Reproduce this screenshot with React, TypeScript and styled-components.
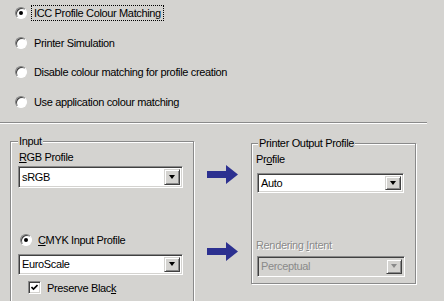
import React from 'react';
import styled, { createGlobalStyle } from 'styled-components';

const GlobalStyle = createGlobalStyle`
  html, body {
    margin: 0;
    padding: 0;
    overflow: hidden;
    background: #d4d3d0;
  }
  body {
    font-family: 'Liberation Sans', Arial, sans-serif;
    font-size: 11px;
    letter-spacing: -0.35px;
    color: #000;
  }
`;

const Page = styled.div`
  width: 444px;
  height: 301px;
  overflow: hidden;
  background: #d4d3d0;
`;

const OptionList = styled.div`
  display: flex;
  flex-direction: column;
  gap: 13.5px;
  padding: 5px 0 0 15px;
`;

const OptionRow = styled.label`
  display: flex;
  align-items: center;
  height: 16px;
  gap: 4px;
`;

const Radio = styled.span<{ checked?: boolean }>`
  position: relative;
  width: 10px;
  height: 10px;
  border-radius: 50%;
  border: 1px solid;
  border-color: #808080 #ffffff #ffffff #808080;
  box-shadow: inset 1px 1px 0 #404040;
  background: #fff;
  flex: none;
  &::after {
    content: '';
    display: ${(p) => (p.checked ? 'block' : 'none')};
    position: absolute;
    left: 3px;
    top: 3px;
    width: 4px;
    height: 4px;
    border-radius: 50%;
    background: #000;
  }
`;

const OptionText = styled.span<{ focused?: boolean }>`
  line-height: 14px;
  padding: 0 2px;
  border: 1px dotted ${(p) => (p.focused ? '#000' : 'transparent')};
`;

const Separator = styled.div`
  width: 427px;
  height: 1px;
  margin-top: 12px;
  background: #8a8a8a;
  border-bottom: 1px solid #fff;
`;

const Bottom = styled.div`
  display: flex;
  align-items: flex-start;
  padding-left: 10px;
`;

const Group = styled.div<{ $w: number; $h: number; $top: number; $left?: number }>`
  position: relative;
  box-sizing: border-box;
  width: ${(p) => p.$w}px;
  height: ${(p) => p.$h}px;
  margin: ${(p) => p.$top}px 0 0 ${(p) => p.$left ?? 0}px;
  border: 1px solid #8a8a8a;
  box-shadow: inset 1px 1px 0 #fff, 1px 1px 0 #fff;
  display: flex;
  flex-direction: column;
`;

const Legend = styled.span<{ $left: number }>`
  position: absolute;
  top: -7px;
  left: ${(p) => p.$left}px;
  padding: 0 1px;
  line-height: 13px;
  background: #d4d3d0;
`;

const FieldLabel = styled.div<{ disabled?: boolean; $left: number; $top: number }>`
  line-height: 13px;
  margin: ${(p) => p.$top}px 0 0 ${(p) => p.$left}px;
  color: ${(p) => (p.disabled ? '#8a8a8a' : '#000')};
  text-shadow: ${(p) => (p.disabled ? '1px 1px 0 #fff' : 'none')};
`;

const Combo = styled.div<{ disabled?: boolean; $w: number; $h: number; $left: number; $top: number }>`
  box-sizing: border-box;
  width: ${(p) => p.$w}px;
  height: ${(p) => p.$h}px;
  margin: ${(p) => p.$top}px 0 0 ${(p) => p.$left}px;
  border: 1px solid;
  border-color: #8a8a8a #fff #fff #8a8a8a;
  box-shadow: inset 1px 1px 0 #404040, inset -1px -1px 0 #d4d3d0;
  background: ${(p) => (p.disabled ? '#d4d3d0' : '#fff')};
  color: ${(p) => (p.disabled ? '#8a8a8a' : '#000')};
  display: flex;
  align-items: center;
  padding: 2px 2px 2px 3px;
`;

const ComboText = styled.span`
  flex: 1;
  line-height: 14px;
`;

const ComboButton = styled.span<{ disabled?: boolean }>`
  box-sizing: border-box;
  width: 16px;
  height: 100%;
  border: 1px solid;
  border-color: #d4d3d0 #404040 #404040 #d4d3d0;
  box-shadow: inset 1px 1px 0 #fff, inset -1px -1px 0 #8a8a8a;
  background: #d4d3d0;
  display: flex;
  align-items: center;
  justify-content: center;
  &::after {
    content: '';
    width: 0;
    height: 0;
    border-left: 3.5px solid transparent;
    border-right: 3.5px solid transparent;
    border-top: 4px solid ${(p) => (p.disabled ? '#8a8a8a' : '#000')};
  }
`;

const RadioLine = styled.label<{ $left: number; $top: number }>`
  display: flex;
  align-items: center;
  gap: 6px;
  height: 14px;
  margin: ${(p) => p.$top}px 0 0 ${(p) => p.$left}px;
`;

const Check = styled.span`
  box-sizing: border-box;
  width: 13px;
  height: 13px;
  border: 1px solid;
  border-color: #8a8a8a #fff #fff #8a8a8a;
  box-shadow: inset 1px 1px 0 #404040, inset -1px -1px 0 #d4d3d0;
  background: #fff;
  display: flex;
  align-items: center;
  justify-content: center;
  flex: none;
`;

const Arrows = styled.div`
  display: flex;
  flex-direction: column;
  gap: 58px;
  margin: 41px 0 0 13px;
  width: 31px;
`;

const Arrow = () => (
  <svg width="31" height="19" viewBox="0 0 31 19">
    <polygon points="0,6 19,6 19,0 31,9.5 19,19 19,13 0,13" fill="#2c3090" />
  </svg>
);

const Combobox = ({ value, disabled, w, h, left, top }: { value: string; disabled?: boolean; w: number; h: number; left: number; top: number }) => (
  <Combo disabled={disabled} $w={w} $h={h} $left={left} $top={top}>
    <ComboText>{value}</ComboText>
    <ComboButton disabled={disabled} />
  </Combo>
);

const options = [
  'ICC Profile Colour Matching',
  'Printer Simulation',
  'Disable colour matching for profile creation',
  'Use application colour matching',
];

export default function App() {
  return (
    <Page>
      <GlobalStyle />
      <OptionList>
        {options.map((o, i) => (
          <OptionRow key={o}>
            <Radio checked={i === 0} />
            <OptionText focused={i === 0}>{o}</OptionText>
          </OptionRow>
        ))}
      </OptionList>
      <Separator />
      <Bottom>
        <Group $w={184} $h={190} $top={17}>
          <Legend $left={7}>Input</Legend>
          <FieldLabel $left={8} $top={9}>
            <u>R</u>GB Profile
          </FieldLabel>
          <Combobox value="sRGB" w={165} h={22} left={7} top={2} />
          <RadioLine $left={9} $top={45}>
            <Radio checked />
            <span>
              <u>C</u>MYK Input Profile
            </span>
          </RadioLine>
          <Combobox value="EuroScale" w={165} h={21} left={7} top={7} />
          <RadioLine $left={17} $top={6}>
            <Check>
              <svg width="7" height="7" viewBox="0 0 7 7">
                <polyline points="0.5,3 2.5,5 6.5,1" fill="none" stroke="#000" strokeWidth="1.6" />
              </svg>
            </Check>
            <span>
              Preserve Blac<u>k</u>
            </span>
          </RadioLine>
        </Group>
        <Arrows>
          <Arrow />
          <Arrow />
        </Arrows>
        <Group $w={165} $h={141} $top={19} $left={13}>
          <Legend $left={6}>Printer Output Profile</Legend>
          <FieldLabel $left={4} $top={9}>
            Pr<u>o</u>file
          </FieldLabel>
          <Combobox value="Auto" w={147} h={20} left={5} top={7} />
          <FieldLabel disabled $left={4} $top={46}>
            Rendering <u>I</u>ntent
          </FieldLabel>
          <Combobox value="Perceptual" disabled w={148} h={21} left={5} top={4} />
        </Group>
      </Bottom>
    </Page>
  );
}
